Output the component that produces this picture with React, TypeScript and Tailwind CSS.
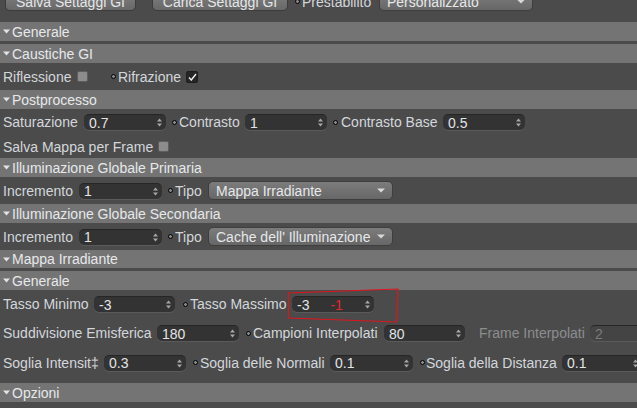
import React from 'react'

const font = { fontFamily: '"Liberation Sans", Arial, sans-serif' }

function Tri() {
  return (
    <svg width="7" height="5" viewBox="0 0 7 5" className="ml-[3px] mr-[2px] shrink-0">
      <path d="M0 0.5 L7 0.5 L3.5 4.5 Z" fill="#e4e4e4" />
    </svg>
  )
}

function Header({ title, h = 'h-[19px]' }: { title: string; h?: string }) {
  return (
    <div className={`${h} bg-[#747474] flex items-center text-[14px] text-[#e6e8ea] leading-none`}>
      <Tri />
      <span>{title}</span>
    </div>
  )
}

function Dot({ className = '' }: { className?: string }) {
  return <span className={`w-[5px] h-[5px] shrink-0 rounded-full border border-black bg-[#8a8a8a] ${className}`} />
}

function Spin({ dim }: { dim?: boolean }) {
  const c = dim ? '#666' : '#a8a8a8'
  return (
    <svg width="5" height="9" viewBox="0 0 5 9" className="shrink-0">
      <path d="M0 3.5 L2.5 0.5 L5 3.5 Z" fill={c} />
      <path d="M0 5.5 L2.5 8.5 L5 5.5 Z" fill={c} />
    </svg>
  )
}

function Input({
  value,
  w,
  extra,
  dim
}: {
  value: string
  w: string
  extra?: React.ReactNode
  dim?: boolean
}) {
  return (
    <div
      className={`${w} h-[16px] shrink-0 rounded-[5px] border-t border-[#262626] shadow-[0_1px_0_#5a5a5a] flex items-center pl-[5px] pr-[4px] text-[14px] leading-none ${
        dim ? 'text-[#7a7a7a] bg-[#444444]' : 'text-[#e2e4e6] bg-[#333333]'
      }`}
    >
      <span className="flex-1 flex items-center">
        {value}
        {extra}
      </span>
      <Spin dim={dim} />
    </div>
  )
}

function Check({ on }: { on?: boolean }) {
  return on ? (
    <span className="w-[12px] h-[12px] shrink-0 rounded-[2px] bg-[#262626] border border-[#1e1e1e] flex items-center justify-center">
      <svg width="9" height="8" viewBox="0 0 9 8">
        <path d="M1 4.5 L3.3 7 L8 1" stroke="#f0f0f0" strokeWidth="1.4" fill="none" />
      </svg>
    </span>
  ) : (
    <span className="w-[11px] h-[11px] shrink-0 rounded-[2px] bg-[#8c8c8c] border border-[#5e5e5e]" />
  )
}

function Select({ value, w, h = 'h-[19px]' }: { value: string; w: string; h?: string }) {
  return (
    <div
      className={`${w} ${h} shrink-0 rounded-[5px] bg-gradient-to-b from-[#7c7c7c] to-[#676767] border border-[#3e3e3e] flex items-center pl-[7px] pr-[7px] text-[14px] text-[#e6e8ea] leading-none`}
    >
      <span className="flex-1">{value}</span>
      <svg width="8" height="5" viewBox="0 0 8 5">
        <path d="M0 0.5 L8 0.5 L4 4.5 Z" fill="#d8d8d8" />
      </svg>
    </div>
  )
}

function Label({
  w,
  children,
  dim,
  className = ''
}: {
  w: string
  children: React.ReactNode
  dim?: boolean
  className?: string
}) {
  return (
    <span
      className={`${w} ${className} block shrink-0 whitespace-nowrap leading-none ${
        dim ? 'text-[#8b8d8f]' : 'text-[#d3d7db]'
      }`}
    >
      {children}
    </span>
  )
}

export default function App() {
  return (
    <div style={font} className="relative w-[637px] h-[408px] bg-[#4b4b4b] overflow-hidden text-[14px]">
      {/* barra superiore */}
      <div className="h-[22px] flex items-start">
        <div className="-mt-[8px] flex items-center">
          <button className="ml-[5px] w-[131px] h-[19px] rounded-[5px] bg-gradient-to-b from-[#7e7e7e] to-[#686868] border border-[#3c3c3c] text-[#e4e6e8] text-[14px] leading-none">
            Salva Settaggi GI
          </button>
          <button className="ml-[16px] w-[136px] h-[19px] rounded-[5px] bg-gradient-to-b from-[#7e7e7e] to-[#686868] border border-[#3c3c3c] text-[#e4e6e8] text-[14px] leading-none">
            Carica Settaggi GI
          </button>
          <Dot className="ml-[7px]" />
          <Label w="w-[77px]" className="ml-[2px]">
            Prestabilito
          </Label>
          <Select value="Personalizzato" w="w-[154px]" />
        </div>
      </div>

      <Header title="Generale" />
      <div className="h-[3px]" />
      <Header title="Caustiche GI" />
      <div className="h-[27px] flex items-center pl-[3px]">
        <Label w="w-[74px]">Riflessione</Label>
        <Check />
        <Dot className="ml-[23px]" />
        <Label w="w-[68px]" className="ml-[2px]">
          Rifrazione
        </Label>
        <Check on />
      </div>

      <Header title="Postprocesso" />
      <div className="h-[26px] flex items-center pl-[3px] overflow-hidden">
        <Label w="w-[81px]">Saturazione</Label>
        <Input value="0.7" w="w-[82px]" />
        <Dot className="ml-[6px]" />
        <Label w="w-[66px]" className="ml-[2px]">
          Contrasto
        </Label>
        <Input value="1" w="w-[82px]" />
        <Dot className="ml-[6px]" />
        <Label w="w-[102px]" className="ml-[3px]">
          Contrasto Base
        </Label>
        <Input value="0.5" w="w-[82px]" />
      </div>
      <div className="h-[23px] flex items-center pl-[3px]">
        <Label w="w-[155px]">Salva Mappa per Frame</Label>
        <Check />
      </div>

      <Header title="Illuminazione Globale Primaria" />
      <div className="h-[27px] flex items-center pl-[3px]">
        <Label w="w-[76px]">Incremento</Label>
        <Input value="1" w="w-[83px]" />
        <Dot className="ml-[6px]" />
        <Label w="w-[33px]" className="ml-[2px]">
          Tipo
        </Label>
        <Select value="Mappa Irradiante" w="w-[185px]" />
      </div>

      <Header title="Illuminazione Globale Secondaria" />
      <div className="h-[27px] flex items-center pl-[3px]">
        <Label w="w-[76px]">Incremento</Label>
        <Input value="1" w="w-[83px]" />
        <Dot className="ml-[6px]" />
        <Label w="w-[33px]" className="ml-[2px]">
          Tipo
        </Label>
        <Select value="Cache dell' Illuminazione" w="w-[185px]" />
      </div>

      <Header title="Mappa Irradiante" h="h-[18px]" />
      <div className="h-[3px]" />
      <Header title="Generale" />

      <div className="h-[28px] flex items-center pl-[3px]">
        <Label w="w-[91px]">Tasso Minimo</Label>
        <Input value="-3" w="w-[81px]" />
        <Dot className="ml-[8px]" />
        <Label w="w-[102px]" className="ml-[2px]">
          Tasso Massimo
        </Label>
        <Input value="-3" w="w-[82px]" extra={<span className="ml-[21px] text-[#e8262b]">-1</span>} />
      </div>
      <div className="h-[30px] flex items-center pl-[3px] overflow-hidden">
        <Label w="w-[154px]">Suddivisione Emisferica</Label>
        <Input value="180" w="w-[82px]" />
        <Dot className="ml-[7px]" />
        <Label w="w-[131px]" className="ml-[2px]">
          Campioni Interpolati
        </Label>
        <Input value="80" w="w-[81px]" />
        <Label w="w-[111px]" className="ml-[14px]" dim>
          Frame Interpolati
        </Label>
        <Input value="2" w="w-[80px]" dim />
      </div>
      <div className="h-[29px] flex items-center pl-[3px] overflow-hidden">
        <Label w="w-[101px]">Soglia Intensit‡</Label>
        <Input value="0.3" w="w-[82px]" />
        <Dot className="ml-[7px]" />
        <Label w="w-[130px]" className="ml-[2px]">
          Soglia delle Normali
        </Label>
        <Input value="0.1" w="w-[83px]" />
        <Dot className="ml-[7px]" />
        <Label w="w-[136px]" className="ml-[1px]">
          Soglia della Distanza
        </Label>
        <Input value="0.1" w="w-[80px]" />
      </div>
      <div className="h-[6px]" />
      <Header title="Opzioni" />

      {/* riquadro rosso di evidenziazione */}
      <svg className="absolute left-0 top-0 pointer-events-none" width="637" height="408">
        <path d="M288.5 293 L398 289 L396.5 322 L288.5 318 Z" fill="none" stroke="#e0141c" strokeWidth="1.2" />
      </svg>
    </div>
  )
}
